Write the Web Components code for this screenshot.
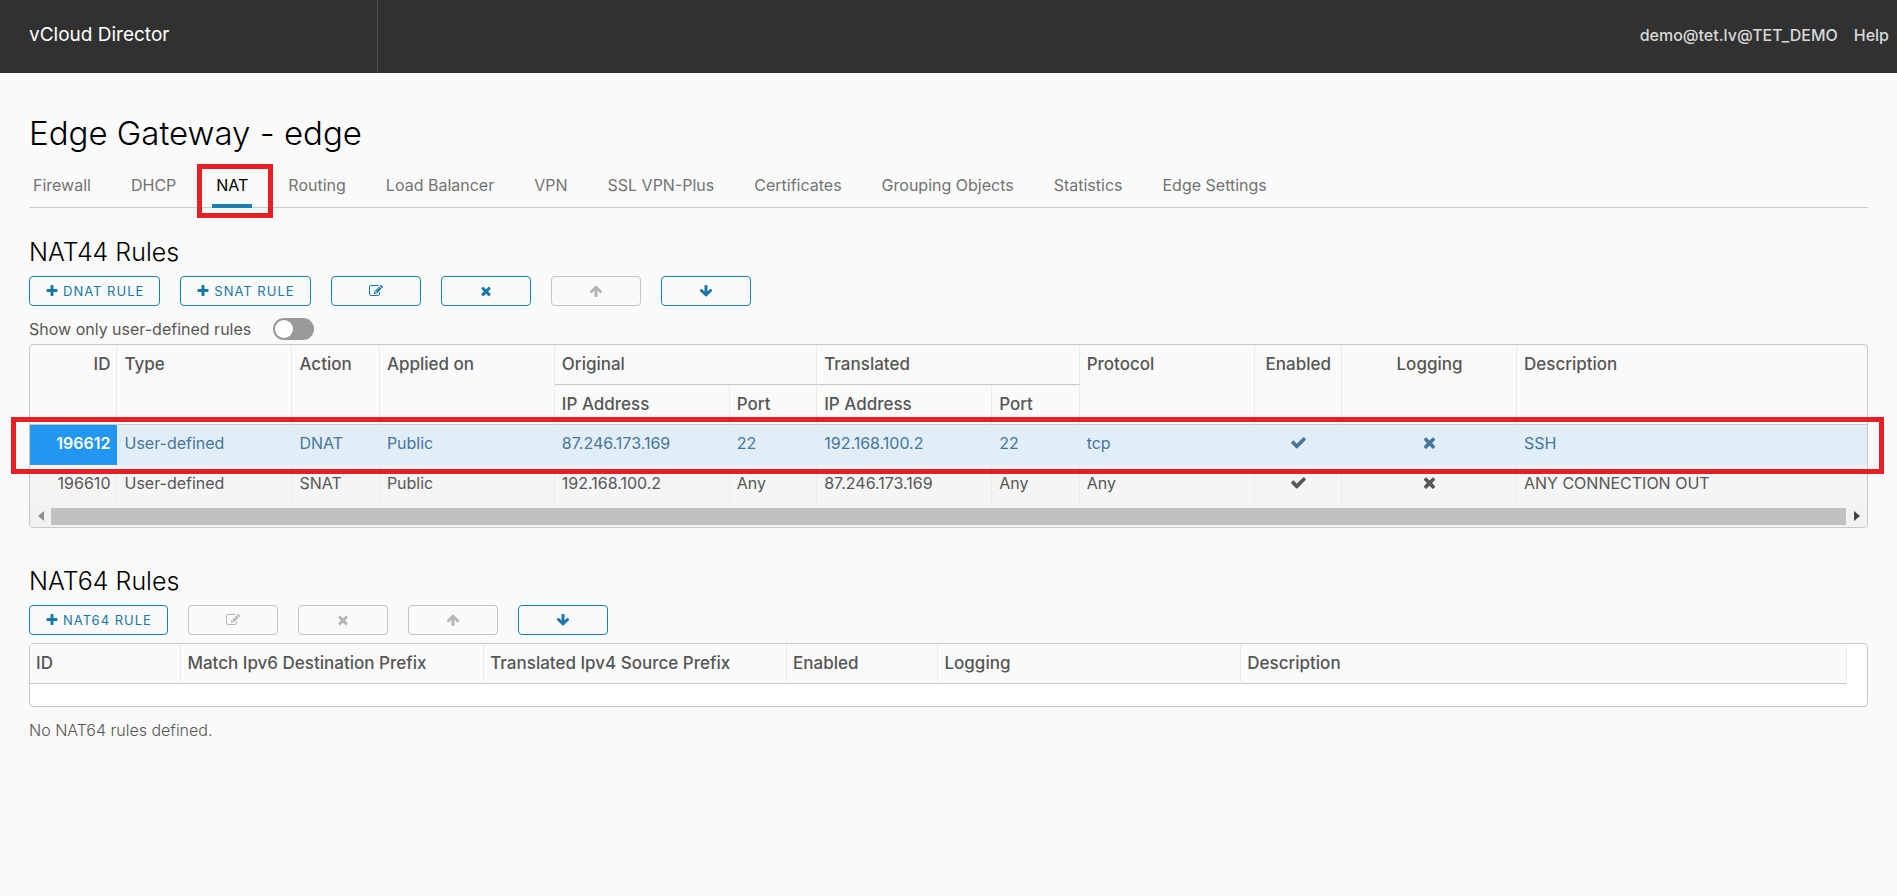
<!DOCTYPE html>
<html lang="en">
<head>
<meta charset="utf-8">
<meta name="viewport" content="width=device-width, initial-scale=1">
<title>vCloud Director - Edge Gateway</title>
<style>
  html, body { margin: 0; background: #fafafa; }
  body { font: 400 16px/24px Inter, "Open Sans", sans-serif; color: #565656; }
</style>
</head>
<body>
<vcd-app></vcd-app>

<template id="tpl-app">
  <style>
    :host { display: block; }
    main { padding: 40px 29px; }
    h1 { margin: 0 0 20px; font-weight: 300; font-size: 33px; line-height: 40px; color: #000; }
    .option { margin: 12px 0 4px; }
    .empty { margin: 11px 0 0; font-weight: 300; }
  </style>
  <vcd-header></vcd-header>
  <main>
    <h1>Edge Gateway - edge</h1>
    <vcd-tabs>
      <vcd-tab>Firewall</vcd-tab>
      <vcd-tab>DHCP</vcd-tab>
      <vcd-tab selected>NAT</vcd-tab>
      <vcd-tab>Routing</vcd-tab>
      <vcd-tab>Load Balancer</vcd-tab>
      <vcd-tab>VPN</vcd-tab>
      <vcd-tab>SSL VPN-Plus</vcd-tab>
      <vcd-tab>Certificates</vcd-tab>
      <vcd-tab>Grouping Objects</vcd-tab>
      <vcd-tab>Statistics</vcd-tab>
      <vcd-tab>Edge Settings</vcd-tab>
    </vcd-tabs>
    <vcd-section heading="NAT44 Rules">
      <vcd-button slot="actions" icon="plus">DNAT RULE</vcd-button>
      <vcd-button slot="actions" icon="plus">SNAT RULE</vcd-button>
      <vcd-button slot="actions" icon="edit" label="Edit"></vcd-button>
      <vcd-button slot="actions" icon="times" label="Delete"></vcd-button>
      <vcd-button slot="actions" icon="up" label="Move up" disabled></vcd-button>
      <vcd-button slot="actions" icon="down" label="Move down"></vcd-button>
      <vcd-switch class="option">Show only user-defined rules</vcd-switch>
      <vcd-nat44-grid></vcd-nat44-grid>
    </vcd-section>
    <vcd-section heading="NAT64 Rules">
      <vcd-button slot="actions" icon="plus">NAT64 RULE</vcd-button>
      <vcd-button slot="actions" icon="edit" label="Edit" disabled></vcd-button>
      <vcd-button slot="actions" icon="times" label="Delete" disabled></vcd-button>
      <vcd-button slot="actions" icon="up" label="Move up" disabled></vcd-button>
      <vcd-button slot="actions" icon="down" label="Move down"></vcd-button>
      <vcd-nat64-grid></vcd-nat64-grid>
      <p class="empty">No NAT64 rules defined.</p>
    </vcd-section>
  </main>
</template>

<template id="tpl-header">
  <style>
    :host { display: block; background: #313131; }
    header { display: flex; justify-content: space-between; height: 73px; }
    .brand { box-sizing: border-box; width: 378px; padding: 23px 29px 0; border-right: 1px solid #4e4e4e;
             font-size: 19px; color: #fff; }
    nav { display: flex; gap: 16px; padding: 23px 8px 0 0; font-weight: 500; }
    a { color: #d9d9d9; text-decoration: none; }
  </style>
  <header>
    <div class="brand">vCloud Director</div>
    <nav><a href="#user">demo@tet.lv@TET_DEMO</a><a href="#help">Help</a></nav>
  </header>
</template>

<template id="tpl-tabs">
  <style>
    :host { display: block; }
    nav { display: flex; gap: 32px; box-shadow: inset 0 -1px #ccc; }
  </style>
  <nav aria-label="Edge Gateway"><slot></slot></nav>
</template>

<template id="tpl-tab">
  <style>
    :host { display: block; position: relative; }
    a { display: block; padding: 0 4px 7px; border-bottom: 4px solid transparent; color: #737373;
        text-decoration: none; white-space: nowrap; }
    vcd-callout { display: none; inset: -9px -21px -10px -15px; }
    :host([selected]) a { color: #000; border-color: #1b7fb0; }
    :host([selected]) vcd-callout { display: block; }
  </style>
  <a href="#tab"><slot></slot></a>
  <vcd-callout></vcd-callout>
</template>

<template id="tpl-callout">
  <style>
    :host { display: block; position: absolute; box-sizing: border-box; border: 5px solid #e81e25; pointer-events: none; }
  </style>
</template>

<template id="tpl-section">
  <style>
    :host { display: block; }
    h2 { margin: 0; padding-top: 28px; font-weight: 300; font-size: 25px; line-height: 32px; color: #000; }
    :host(:not(:first-of-type)) h2 { padding-top: 37px; }
    .actions { display: flex; flex-wrap: wrap; gap: 20px; margin: 8px 0; }
  </style>
  <section>
    <h2></h2>
    <div class="actions"><slot name="actions"></slot></div>
    <slot></slot>
  </section>
</template>

<template id="tpl-button">
  <style>
    :host { display: block; }
    button { display: flex; align-items: center; justify-content: center; gap: 4px; box-sizing: border-box;
             min-width: 90px; height: 30px; padding: 0 15px; border: 1px solid #1b7fa8; border-radius: 4px;
             background: transparent; color: #1778a8; font: inherit; font-size: 13px; letter-spacing: 1px; }
    button:disabled { border-color: #c4c4c4; color: #b5b5b5; }
    .text:empty { display: none; }
  </style>
  <button type="button"><vcd-icon></vcd-icon><span class="text"></span></button>
</template>

<template id="tpl-switch">
  <style>
    :host { display: flex; }
    label { display: flex; align-items: center; gap: 22px; height: 22px; }
    input { appearance: none; margin: 0; width: 41px; height: 22px; padding: 2px; border-radius: 11px; background: #999; }
    input::before { content: ""; display: block; width: 18px; height: 18px; border-radius: 9px; background: #fff; }
    input:checked { background: #1b7fb0; }
    input:checked::before { margin-left: auto; }
  </style>
  <label for="toggle"><slot></slot><input type="checkbox" role="switch" id="toggle"></label>
</template>

<template id="tpl-nat44">
  <style>
    :host { display: block; position: relative; border: 1px solid #c8c8c8; border-radius: 4px; }
    table { width: 100%; table-layout: fixed; border-collapse: separate; border-spacing: 0; }
    th, td { box-sizing: border-box; height: 40px; padding: 0 6px 0 7px; border-right: 1px solid #ebebeb; text-align: left;
             vertical-align: top; white-space: nowrap; line-height: 37px; }
    th { font-size: 17px; font-weight: 500; line-height: 38px; border-bottom: 1px solid #c8c8c8; }
    tr > :last-child { border-right: 0; }
    thead tr:last-child > th:last-child { border-right: 1px solid #ebebeb; }
    .num { text-align: right; }
    .mid { text-align: center; }
    vcd-icon { --size: 17px; vertical-align: -2px; }
    tbody tr { background: #f5f5f5; }
    tbody .selected { background: #e1eef8; color: #47759b; }
    .selected td { border-color: #e3eaf2; }
    .selected .num { background: #2196f3; border-color: #2196f3; color: #fff; font-weight: 600; }
    .scroll { display: flex; align-items: center; height: 22px; background: #f2f2f2; border-radius: 0 0 4px 4px; color: #8f8f8f; }
    .thumb { flex: 1; height: 17px; background: #c1c1c1; }
    .end { display: flex; justify-content: center; width: 21px; }
    .end svg { display: block; }
    .end:last-child { color: #444; }
    vcd-callout { left: -19px; right: -17px; top: 72px; height: 57px; }
  </style>
  <table>
    <colgroup>
      <col span="21">
    </colgroup>
    <thead>
      <tr>
        <th rowspan="2" class="num">ID</th><th rowspan="2" colspan="2">Type</th><th rowspan="2">Action</th>
        <th rowspan="2" colspan="2">Applied on</th><th colspan="3">Original</th><th colspan="3">Translated</th>
        <th rowspan="2" colspan="2">Protocol</th><th rowspan="2" class="mid">Enabled</th>
        <th rowspan="2" colspan="2" class="mid">Logging</th><th rowspan="2" colspan="4">Description</th>
      </tr>
      <tr><th colspan="2">IP Address</th><th>Port</th><th colspan="2">IP Address</th><th>Port</th></tr>
    </thead>
    <tbody>
      <tr class="selected">
        <td class="num">196612</td><td colspan="2">User-defined</td><td>DNAT</td><td colspan="2">Public</td>
        <td colspan="2">87.246.173.169</td><td>22</td><td colspan="2">192.168.100.2</td><td>22</td><td colspan="2">tcp</td>
        <td class="mid"><vcd-icon name="check"></vcd-icon></td><td colspan="2" class="mid"><vcd-icon name="times"></vcd-icon></td>
        <td colspan="4">SSH</td>
      </tr>
      <tr>
        <td class="num">196610</td><td colspan="2">User-defined</td><td>SNAT</td><td colspan="2">Public</td>
        <td colspan="2">192.168.100.2</td><td>Any</td><td colspan="2">87.246.173.169</td><td>Any</td><td colspan="2">Any</td>
        <td class="mid"><vcd-icon name="check"></vcd-icon></td><td colspan="2" class="mid"><vcd-icon name="times"></vcd-icon></td>
        <td colspan="4">ANY CONNECTION OUT</td>
      </tr>
    </tbody>
  </table>
  <div class="scroll">
    <span class="end"><svg width="6" height="10" viewBox="0 0 6 10"><path fill="currentColor" d="M6 0v10L0 5z"/></svg></span>
    <span class="thumb"></span>
    <span class="end"><svg width="6" height="10" viewBox="0 0 6 10"><path fill="currentColor" d="M0 0v10l6-5z"/></svg></span>
  </div>
  <vcd-callout></vcd-callout>
</template>

<template id="tpl-nat64">
  <style>
    :host { display: block; padding: 0 20px 22px 0; border: 1px solid #c8c8c8; border-radius: 4px; background: #fff; }
    table { width: 100%; table-layout: fixed; border-collapse: separate; border-spacing: 0; background: #fafafa; }
    th { box-sizing: border-box; height: 40px; padding: 0 6px; border: 0 solid #ebebeb; border-right-width: 1px;
         border-bottom: 1px solid #c8c8c8; text-align: left; white-space: nowrap; font-size: 17px; font-weight: 500;
         vertical-align: top; line-height: 38px; }
  </style>
  <table>
    <colgroup>
      <col span="12">
    </colgroup>
    <thead>
      <tr>
        <th>ID</th><th colspan="2">Match Ipv6 Destination Prefix</th><th colspan="2">Translated Ipv4 Source Prefix</th>
        <th>Enabled</th><th colspan="2">Logging</th><th colspan="4">Description</th>
      </tr>
    </thead>
  </table>
</template>

<script>
  const ICONS = {
    plus: 'M1600 736v192q0 40-28 68t-68 28h-416v416q0 40-28 68t-68 28h-192q-40 0-68-28t-28-68v-416h-416q-40 0-68-28t-28-68v-192q0-40 28-68t68-28h416v-416q0-40 28-68t68-28h192q40 0 68 28t28 68v416h416q40 0 68 28t28 68z',
    times: 'M1490 1322q0 40-28 68l-136 136q-28 28-68 28t-68-28l-294-294-294 294q-28 28-68 28t-68-28l-136-136q-28-28-28-68t28-68l294-294-294-294q-28-28-28-68t28-68l136-136q28-28 68-28t68 28l294 294 294-294q28-28 68-28t68 28l136 136q28 28 28 68t-28 68l-294 294 294 294q28 28 28 68z',
    check: 'M1671 566q0 40-28 68l-724 724-136 136q-28 28-68 28t-68-28l-136-136-362-362q-28-28-28-68t28-68l136-136q28-28 68-28t68 28l294 295 656-657q28-28 68-28t68 28l136 136q28 28 28 68z',
    up: 'M1675 971q0 51-37 90l-75 75q-38 38-91 38-54 0-90-38l-294-293v704q0 52-37.5 84.5t-90.5 32.5h-128q-53 0-90.5-32.5t-37.5-84.5v-704l-294 293q-36 38-90 38t-90-38l-75-75q-38-38-38-90 0-53 38-91l651-651q35-37 90-37 54 0 91 37l651 651q37 39 37 91z',
    down: 'M1675 832q0 53-37 90l-651 652q-39 37-91 37-53 0-90-37l-651-652q-38-36-38-90 0-53 38-91l74-75q39-37 91-37 53 0 90 37l294 294v-704q0-52 38-90t90-38h128q52 0 90 38t38 90v704l294-294q37-37 90-37 52 0 91 37l75 75q37 39 37 91z',
    edit: 'M888 1184l116-116-152-152-116 116v56h96v96h56zm440-720q-16-16-33 1l-350 350q-17 17-1 33t33-1l350-350q17-17 1-33zm80 594v190q0 119-84.5 203.5t-203.5 84.5h-832q-119 0-203.5-84.5t-84.5-203.5v-832q0-119 84.5-203.5t203.5-84.5h832q63 0 117 25 15 7 18 23 3 17-9 29l-49 49q-14 14-32 8-23-6-45-6h-832q-66 0-113 47t-47 113v832q0 66 47 113t113 47h832q66 0 113-47t47-113v-126q0-13 9-22l64-64q15-15 35-7t20 29zm-96-738l288 288-672 672h-288v-288zm444 132l-92 92-288-288 92-92q28-28 68-28t68 28l152 152q28 28 28 68t-28 68z'
  };

  class TemplateElement extends HTMLElement {
    constructor() {
      super();
      this.attachShadow({ mode: 'open' })
        .append(document.getElementById('tpl-' + this.constructor.template).content.cloneNode(true));
    }
  }

  class VcdIcon extends HTMLElement {
    static observedAttributes = ['name'];
    constructor() {
      super();
      this.attachShadow({ mode: 'open' });
    }
    attributeChangedCallback() {
      this.shadowRoot.innerHTML = `
        <style>
          :host { display: inline-block; width: var(--size, 14px); height: var(--size, 14px); }
          svg { display: block; width: 100%; height: 100%; fill: currentColor; }
        </style>
        <svg viewBox="0 0 1792 1792" aria-hidden="true"><path d="${ICONS[this.getAttribute('name')]}"/></svg>`;
    }
  }
  customElements.define('vcd-icon', VcdIcon);

  customElements.define('vcd-callout', class extends TemplateElement { static template = 'callout'; });
  customElements.define('vcd-header', class extends TemplateElement { static template = 'header'; });
  customElements.define('vcd-tabs', class extends TemplateElement { static template = 'tabs'; });
  customElements.define('vcd-tab', class extends TemplateElement {
    static template = 'tab';
    connectedCallback() {
      if (this.hasAttribute('selected')) this.shadowRoot.querySelector('a').setAttribute('aria-current', 'page');
    }
  });
  customElements.define('vcd-section', class extends TemplateElement {
    static template = 'section';
    connectedCallback() {
      this.shadowRoot.querySelector('h2').textContent = this.getAttribute('heading');
    }
  });
  customElements.define('vcd-button', class extends TemplateElement {
    static template = 'button';
    connectedCallback() {
      const button = this.shadowRoot.querySelector('button');
      button.disabled = this.hasAttribute('disabled');
      if (this.hasAttribute('label')) button.setAttribute('aria-label', this.getAttribute('label'));
      button.querySelector('vcd-icon').setAttribute('name', this.getAttribute('icon'));
      if (this.textContent) button.querySelector('.text').append(document.createElement('slot'));
    }
  });
  customElements.define('vcd-switch', class extends TemplateElement { static template = 'switch'; });
  customElements.define('vcd-nat44-grid', class extends TemplateElement { static template = 'nat44'; });
  customElements.define('vcd-nat64-grid', class extends TemplateElement { static template = 'nat64'; });
  customElements.define('vcd-app', class extends TemplateElement { static template = 'app'; });
</script>
</body>
</html>
